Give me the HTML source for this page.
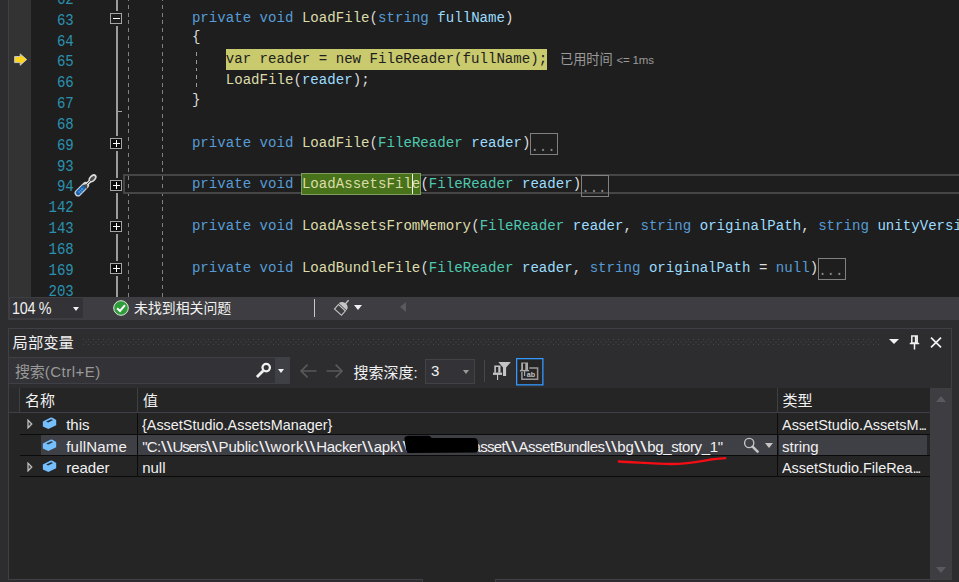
<!DOCTYPE html>
<html lang="zh-CN">
<head>
<meta charset="utf-8">
<title>局部变量</title>
<style>
html,body{margin:0;padding:0;}
body{width:959px;height:582px;overflow:hidden;background:#2d2d30;position:relative;
  font-family:"Liberation Sans","Noto Sans CJK SC",sans-serif;color:#f1f1f1;}
div,span,i{box-sizing:border-box;}
#editor{position:absolute;left:0;top:0;width:959px;height:297px;background:#1e1e1e;overflow:hidden;}
#edge{position:absolute;left:0;top:0;width:8px;height:297px;background:#2d2d30;}
#margin{position:absolute;left:8px;top:0;width:23px;height:297px;background:#333333;border-left:1px solid #3f3f46;}
.ln{position:absolute;left:31px;width:43.4px;height:20.83px;line-height:20.83px;text-align:right;color:#2b91af;
  font-family:"Liberation Mono",monospace;font-size:14.103px;white-space:pre;}
.cl{position:absolute;height:20.83px;line-height:20.83px;white-space:pre;
  font-family:"Liberation Mono",monospace;font-size:14.103px;color:#dcdcdc;}
.sy{display:inline-block;transform:scaleY(1.10);transform-origin:0 78%;position:relative;top:0.5px;}
.sn{display:inline-block;transform:scaleY(1.17);transform-origin:0 78%;position:relative;top:3.5px;left:-0.6px;}
.k{color:#569cd6;} .m{color:#dcdcaa;} .t{color:#4ec9b0;} .v{color:#9cdcfe;} .p{color:#dcdcdc;}
.hlt{color:#1e1e1e;}
.sy.br{top:-1px;}
.curstmt{position:absolute;height:21px;background:#c9c96d;}
.selword{position:absolute;height:22px;background:#48731a;border:1px solid #7f9c63;}
.caret{position:absolute;width:1px;height:20px;background:#f4f4f4;}
.ell{position:absolute;width:28px;height:22px;border:1px solid #808080;color:#8a8a8a;
  font-family:"Liberation Mono",monospace;font-size:14.103px;line-height:21px;white-space:pre;padding-left:0.6px;}
.ell span{display:inline-block;position:relative;top:2.5px;left:-1px;}
#curline{position:absolute;left:123px;top:173.5px;width:840px;height:20.5px;border:2px solid #464646;}
.guide{position:absolute;top:-2.99px;width:1.3px;height:300px;
  background:repeating-linear-gradient(to bottom,#828282 0,#828282 4px,transparent 4px,transparent 7.79px);}
#g3{position:absolute;left:195.7px;top:51.54px;width:1.3px;height:35.5px;
  background:repeating-linear-gradient(to bottom,#9a9a9a 0,#9a9a9a 3.9px,transparent 3.9px,transparent 7.79px);}
#outline{position:absolute;left:116.2px;top:0;width:1.7px;height:297px;background:#9c9c9c;}
.fold{position:absolute;left:110.2px;width:12px;height:11px;border:1px solid #a5a5a5;background:#0c0c0c;}
.fold.mn{background:#1e1e1e;}
.fgap{position:absolute;left:115px;width:4px;height:15px;background:#1e1e1e;}
.fold .fh{position:absolute;left:2px;top:4px;width:7px;height:1px;background:#fff;}
.fold .fv{position:absolute;left:5px;top:1px;width:1px;height:7px;background:#fff;}
.tick{position:absolute;left:117px;width:5px;height:1px;background:#a5a5a5;}
#elapsed{position:absolute;left:560px;top:50.8px;height:18px;line-height:18px;font-size:13.2px;color:#9a9a9a;white-space:pre;}
#elapsed b{font-weight:normal;font-size:11.5px;letter-spacing:-0.15px;}

#strip{position:absolute;left:8px;top:297px;width:951px;height:23px;background:#3e3e42;}
#zoom{position:absolute;left:2px;top:1px;width:73px;height:20px;background:#333337;}
#zoom span{position:absolute;left:2.4px;top:0.8px;line-height:20.4px;font-size:15.7px;letter-spacing:-0.3px;color:#f1f1f1;white-space:pre;transform:scaleX(0.915);transform-origin:0 0;}
.tri{position:absolute;width:0;height:0;border-left:3.5px solid transparent;border-right:3.5px solid transparent;border-top:4px solid #f1f1f1;}
#okc{position:absolute;left:105px;top:2.5px;width:16px;height:16px;}
#noissue{position:absolute;left:126px;top:0;height:23px;line-height:22.5px;font-size:13.9px;color:#f1f1f1;white-space:pre;}
#vsep{position:absolute;left:306px;top:2px;width:1px;height:18px;background:#c8c8c8;}
#brush{position:absolute;left:318px;top:0px;width:26px;height:24px;}
#larr{position:absolute;left:392px;top:5px;width:0;height:0;border-top:5.5px solid transparent;border-bottom:5.5px solid transparent;border-right:6px solid #5a5a5e;}

#panel{position:absolute;left:8px;top:328px;width:944px;height:252px;border:1px solid #3f3f46;border-bottom:none;background:#2d2d30;}
#ptitle{position:absolute;left:3.6px;top:2.7px;height:22px;line-height:22px;font-size:15.3px;color:#f1f1f1;white-space:pre;}
#grip{position:absolute;left:74px;top:10px;width:797px;height:6px;
  background-image:radial-gradient(circle at 0.5px 0.5px,#47474b 0.55px,transparent 0.85px),radial-gradient(circle at 0.5px 0.5px,#47474b 0.55px,transparent 0.85px);
  background-size:5px 5px,5px 5px;background-position:0 0,2.5px 2.5px;}
#search{position:absolute;left:0;top:28px;width:281px;height:27px;background:#333337;border:1px solid #3f3f46;border-left:none;}
#search .ph{position:absolute;left:6px;top:0.8px;line-height:26px;font-size:15px;color:#999999;white-space:pre;letter-spacing:-0.15px;}
#search .dd{position:absolute;left:266px;top:0;width:15px;height:25px;background:#3f3f46;}
#tbl{position:absolute;left:0;top:59px;width:921px;height:191px;background:#252526;}
#hdr{position:absolute;left:0;top:0;width:921px;height:25px;background:#252526;border-bottom:1px solid #3f3f46;}
#hdr .ind{position:absolute;left:0;top:0;width:11px;height:24px;background:#2a2a2c;border-right:1px solid #3f3f46;}
.hc{position:absolute;top:0.8px;height:24px;line-height:24px;font-size:15px;color:#f1f1f1;white-space:pre;}
.hsep{position:absolute;top:0;width:1px;height:24px;background:#3f3f46;}
.row{position:absolute;left:11px;width:910px;height:21px;border-bottom:1px solid #0b0b0b;}
.cell{position:absolute;top:1.7px;height:20px;line-height:20px;font-size:15px;color:#f1f1f1;white-space:pre;transform-origin:0 0;}
.dots{letter-spacing:-1.8px;}
.bsw{display:inline-block;vertical-align:top;height:20px;}
.bs{display:inline-block;transform-origin:0 50%;position:relative;left:0.3px;}
.csep{position:absolute;top:25px;width:1px;height:64px;background:#0b0b0b;}
.selbg{position:absolute;top:0;height:20px;background:#3f3f46;}
.exp{position:absolute;left:6.8px;top:6.2px;width:7px;height:10px;}
.cube{position:absolute;left:22px;top:4px;width:15px;height:13px;}
#sb{position:absolute;left:921px;top:59px;width:22px;height:191px;background:#3e3e42;}
</style>
</head>
<body>
<div id="editor">
  <div id="edge"></div><div id="margin"></div>
  <div class="guide" style="left:127.7px"></div>
  <div class="guide" style="left:161.9px"></div>
  <div id="g3"></div>
  <div id="outline"></div>
  <div id="curline"></div>
<div class="ln" style="top:-13.50px"><span class="sn">62</span></div>
<div class="ln" style="top:7.33px"><span class="sn">63</span></div>
<div class="fgap" style="top:10.93px"></div>
<div class="fold mn" style="top:12.93px"><i class="fh"></i></div>
<div class="cl" style="left:191.90px;top:7.33px"><span class="sy k">private void </span></div>
<div class="cl" style="left:301.92px;top:7.33px"><span class="sy m">LoadFile</span></div>
<div class="cl" style="left:369.62px;top:7.33px"><span class="sy p">(</span></div>
<div class="cl" style="left:378.09px;top:7.33px"><span class="sy k">string </span></div>
<div class="cl" style="left:437.33px;top:7.33px"><span class="sy v">fullName</span></div>
<div class="cl" style="left:505.03px;top:7.33px"><span class="sy p">)</span></div>
<div class="ln" style="top:28.16px"><span class="sn">64</span></div>
<div class="cl" style="left:191.90px;top:28.16px"><span class="sy p br">{</span></div>
<div class="ln" style="top:48.99px"><span class="sn">65</span></div>
<div class="curstmt" style="left:226px;top:49px;width:321px"></div>
<div class="cl" style="left:225.75px;top:48.99px"><span class="sy hlt">var reader = new FileReader(fullName);</span></div>
<div class="ln" style="top:69.82px"><span class="sn">66</span></div>
<div class="cl" style="left:225.75px;top:69.82px"><span class="sy m">LoadFile</span></div>
<div class="cl" style="left:293.46px;top:69.82px"><span class="sy p">(</span></div>
<div class="cl" style="left:301.92px;top:69.82px"><span class="sy v">reader</span></div>
<div class="cl" style="left:352.70px;top:69.82px"><span class="sy p">);</span></div>
<div class="ln" style="top:90.65px"><span class="sn">67</span></div>
<div class="tick" style="top:110.68px"></div>
<div class="cl" style="left:191.90px;top:90.65px"><span class="sy p br">}</span></div>
<div class="ln" style="top:111.48px"><span class="sn">68</span></div>
<div class="ln" style="top:132.31px"><span class="sn">69</span></div>
<div class="fgap" style="top:135.91px"></div>
<div class="fold" style="top:137.91px"><i class="fh"></i><i class="fv"></i></div>
<div class="cl" style="left:191.90px;top:132.31px"><span class="sy k">private void </span></div>
<div class="cl" style="left:301.92px;top:132.31px"><span class="sy m">LoadFile</span></div>
<div class="cl" style="left:369.62px;top:132.31px"><span class="sy p">(</span></div>
<div class="cl" style="left:378.09px;top:132.31px"><span class="sy t">FileReader </span></div>
<div class="cl" style="left:471.18px;top:132.31px"><span class="sy v">reader</span></div>
<div class="cl" style="left:521.96px;top:132.31px"><span class="sy p">)</span></div>
<div class="ell" style="left:529.82px;top:133.01px"><span>...</span></div>
<div class="ln" style="top:153.14px"><span class="sn">93</span></div>
<div class="ln" style="top:173.97px"><span class="sn">94</span></div>
<div class="fgap" style="top:177.57px"></div>
<div class="fold" style="top:179.57px"><i class="fh"></i><i class="fv"></i></div>
<div class="cl" style="left:191.90px;top:173.97px"><span class="sy k">private void </span></div>
<div class="selword" style="left:301.32px;top:172.97px;width:119.48px"></div>
<div class="cl" style="left:301.92px;top:173.97px"><span class="sy m">LoadAssetsFile</span></div>
<div class="caret" style="left:411.94px;top:174.27px"></div>
<div class="cl" style="left:420.40px;top:173.97px"><span class="sy p">(</span></div>
<div class="cl" style="left:428.86px;top:173.97px"><span class="sy t">FileReader </span></div>
<div class="cl" style="left:521.96px;top:173.97px"><span class="sy v">reader</span></div>
<div class="cl" style="left:572.74px;top:173.97px"><span class="sy p">)</span></div>
<div class="ell" style="left:580.60px;top:174.67px"><span>...</span></div>
<div class="ln" style="top:194.80px"><span class="sn">142</span></div>
<div class="ln" style="top:215.63px"><span class="sn">143</span></div>
<div class="fgap" style="top:219.23px"></div>
<div class="fold" style="top:221.23px"><i class="fh"></i><i class="fv"></i></div>
<div class="cl" style="left:191.90px;top:215.63px"><span class="sy k">private void </span></div>
<div class="cl" style="left:301.92px;top:215.63px"><span class="sy m">LoadAssetsFromMemory</span></div>
<div class="cl" style="left:471.18px;top:215.63px"><span class="sy p">(</span></div>
<div class="cl" style="left:479.64px;top:215.63px"><span class="sy t">FileReader </span></div>
<div class="cl" style="left:572.74px;top:215.63px"><span class="sy v">reader</span></div>
<div class="cl" style="left:623.51px;top:215.63px"><span class="sy p">, </span></div>
<div class="cl" style="left:640.44px;top:215.63px"><span class="sy k">string </span></div>
<div class="cl" style="left:699.68px;top:215.63px"><span class="sy v">originalPath</span></div>
<div class="cl" style="left:801.24px;top:215.63px"><span class="sy p">, </span></div>
<div class="cl" style="left:818.16px;top:215.63px"><span class="sy k">string </span></div>
<div class="cl" style="left:877.40px;top:215.63px"><span class="sy v">unityVersion</span></div>
<div class="cl" style="left:978.96px;top:215.63px"><span class="sy p">, </span></div>
<div class="ln" style="top:236.46px"><span class="sn">168</span></div>
<div class="ln" style="top:257.29px"><span class="sn">169</span></div>
<div class="fgap" style="top:260.89px"></div>
<div class="fold" style="top:262.89px"><i class="fh"></i><i class="fv"></i></div>
<div class="cl" style="left:191.90px;top:257.29px"><span class="sy k">private void </span></div>
<div class="cl" style="left:301.92px;top:257.29px"><span class="sy m">LoadBundleFile</span></div>
<div class="cl" style="left:420.40px;top:257.29px"><span class="sy p">(</span></div>
<div class="cl" style="left:428.86px;top:257.29px"><span class="sy t">FileReader </span></div>
<div class="cl" style="left:521.96px;top:257.29px"><span class="sy v">reader</span></div>
<div class="cl" style="left:572.74px;top:257.29px"><span class="sy p">, </span></div>
<div class="cl" style="left:589.66px;top:257.29px"><span class="sy k">string </span></div>
<div class="cl" style="left:648.90px;top:257.29px"><span class="sy v">originalPath </span></div>
<div class="cl" style="left:758.92px;top:257.29px"><span class="sy p">= </span></div>
<div class="cl" style="left:775.85px;top:257.29px"><span class="sy k">null</span></div>
<div class="cl" style="left:809.70px;top:257.29px"><span class="sy p">)</span></div>
<div class="ell" style="left:817.56px;top:257.99px"><span>...</span></div>
<div class="ln" style="top:278.12px"><span class="sn">203</span></div>
  <div id="elapsed">已用时间 <b>&lt;= 1ms</b></div>
  <!-- current statement arrow -->
  <svg style="position:absolute;left:8px;top:48px" width="28" height="24" viewBox="0 0 28 24">
    <path d="M6.6 8.5 H12.2 V5.9 L18.7 11.5 L12.2 17.3 V14.6 H6.6 Z" fill="#ffd61e" stroke="#c9c9cf" stroke-width="0.9" stroke-linejoin="miter"/>
  </svg>
  <!-- quick action screwdriver -->
  <svg style="position:absolute;left:70px;top:170px" width="32" height="30" viewBox="0 0 32 30">
    <path d="M8 23 L15.6 15.4" stroke="#d9d9d9" stroke-width="6.8" stroke-linecap="round" fill="none"/>
    <path d="M15 16 L21.4 9.8" stroke="#d9d9d9" stroke-width="3.2" stroke-linecap="round" fill="none"/>
    <ellipse cx="22.6" cy="8.2" rx="4.7" ry="3.2" transform="rotate(-47 22.6 8.2)" fill="#d9d9d9"/>
    <ellipse cx="22.4" cy="8.5" rx="3.1" ry="1.6" transform="rotate(-47 22.4 8.5)" fill="#4a4a4a"/>
    <path d="M8.2 22.8 L13.6 17.4" stroke="#1662ae" stroke-width="4.8" stroke-linecap="round" fill="none"/>
    <path d="M12.6 15.2 L17 19 L17.4 15 L15.6 14.2 Z" fill="#4a4a4a"/>
    <path d="M15.6 15.4 L20.6 10.4" stroke="#4a4a4a" stroke-width="1" fill="none"/>
    <path d="M9.4 19.2 l3.6 3.6 M11 17.8 l3.4 3.4 M8 20.8 l3.4 3.4" stroke="#7fb0e0" stroke-width="0.5"/>
    <path d="M8.6 22.6 l4.6 -4.6 M10.2 24 l4.6 -4.6" stroke="#7fb0e0" stroke-width="0.5"/>
  </svg>
</div>

<div id="strip">
  <div id="zoom"><span>104 %</span><i class="tri" style="left:63.2px;top:9px"></i></div>
  <svg id="okc" viewBox="0 0 16 16"><circle cx="8" cy="8" r="7.3" fill="#2f9b3a" stroke="#dfe8df" stroke-width="1"/><path d="M4.1 8.3 L7 11 L12 5.2" fill="none" stroke="#fff" stroke-width="2"/></svg>
  <div id="noissue">未找到相关问题</div>
  <div id="vsep"></div>
  <svg id="brush" viewBox="0 0 26 24">
    <g transform="translate(14.4,12.4) rotate(42)" fill="none" stroke="#c6c6c6">
      <path d="M0 -7.4 V-12.2" stroke-width="1.4"/>
      <path d="M-5.2 -3.5 A5.2 4.6 0 0 1 5.2 -3.5 Z" fill="#c6c6c6" stroke="none"/>
      <path d="M-4.7 -2.3 H4.7 V3.6 H-4.7 Z" stroke-width="1.1"/>
    </g>
  </svg>
  <i class="tri" style="left:345.8px;top:7.6px;border-left-width:4.8px;border-right-width:4.8px;border-top-width:5.2px"></i>
  <i id="larr"></i>
</div>

<div id="panel">
  <div id="ptitle">局部变量</div>
  <div id="grip"></div>
  <!-- title buttons -->
  <i class="tri" style="left:880px;top:9.8px;border-left-width:5px;border-right-width:5px;border-top-width:5.2px"></i>
  <svg style="position:absolute;left:900px;top:5.7px" width="11" height="15" viewBox="0 0 11 15">
    <path d="M2.8 1 H8.2 V8 H2.8 Z M6.6 1 V8 M0.8 8.6 H10.2 M5.5 8.6 V14.4" fill="none" stroke="#f1f1f1" stroke-width="1.5"/>
  </svg>
  <svg style="position:absolute;left:921px;top:7.7px" width="12" height="11" viewBox="0 0 12 11">
    <path d="M1 0.6 L11 10.4 M11 0.6 L1 10.4" stroke="#f1f1f1" stroke-width="1.7" fill="none"/>
  </svg>

  <div id="search">
    <span class="ph">搜索<span style="letter-spacing:0.5px">(Ctrl+E)</span></span>
    <div class="dd"></div>
    <svg style="position:absolute;left:246px;top:3.6px" width="17" height="17" viewBox="0 0 17 17">
      <circle cx="11.2" cy="5.6" r="3.7" fill="none" stroke="#f1f1f1" stroke-width="2.3"/>
      <path d="M8.2 8.8 L1.9 14.9" stroke="#f1f1f1" stroke-width="2.8" stroke-linecap="butt"/>
    </svg>
    <i class="tri" style="left:269.2px;top:10.8px;border-left-width:3.8px;border-right-width:3.8px;border-top-width:4px"></i>
  </div>
  <!-- nav arrows -->
  <svg style="position:absolute;left:290px;top:33.8px" width="54" height="16" viewBox="0 0 54 16">
    <path d="M17.6 8 H2.6 M8.6 1.6 L2.2 8 L8.6 14.4" fill="none" stroke="#58585a" stroke-width="1.7"/>
    <path d="M27.6 8 H42.6 M36.6 1.6 L43 8 L36.6 14.4" fill="none" stroke="#58585a" stroke-width="1.7"/>
  </svg>
  <div style="position:absolute;left:344.5px;top:30px;line-height:27px;font-size:15px;color:#f1f1f1;white-space:pre;">搜索深度:</div>
  <div style="position:absolute;left:416px;top:30px;width:50px;height:25px;background:#333337;border:1px solid #434346;">
    <span style="position:absolute;left:5px;top:0;line-height:22px;font-size:15px;color:#f1f1f1;">3</span>
    <i class="tri" style="left:36.5px;top:9.6px;border-top-color:#999999;border-left-width:3.6px;border-right-width:3.6px;border-top-width:4px"></i>
  </div>
  <div style="position:absolute;left:475px;top:31px;width:1px;height:22px;background:#46464a;"></div>
  <!-- filter pin icons -->
  <svg style="position:absolute;left:479px;top:25px" width="60" height="36" viewBox="0 0 60 36">
    <g fill="#c4c4c4" stroke="none">
      <path d="M6.3 11.6 H12.5 V18.8 H6.3 Z M7.9 13 V18.8 H10.3 V13 Z" fill-rule="evenodd"/>
      <rect x="5" y="18.6" width="9.1" height="2.3"/>
      <rect x="9" y="20.8" width="1.1" height="5.2"/>
      <path d="M10.3 8.1 H22.8 L18.1 13.6 V21.9 H15 V13.6 Z"/>
    </g>
    <rect x="28.65" y="4.65" width="26.2" height="26.2" fill="#262424" stroke="#3399ff" stroke-width="1.3"/>
    <g fill="#a9a9a9" stroke="none">
      <path d="M33.2 8.4 H40 V16.3 H33.2 Z M35 9.6 V16.3 H37.3 V9.6 Z" fill-rule="evenodd"/>
      <rect x="31.9" y="15.9" width="9.2" height="1.5"/>
      <rect x="36" y="17.2" width="1.2" height="4.8"/>
    </g>
    <path d="M41.3 14.1 H49.6 V25.2 H33.9 V18.1" fill="none" stroke="#9a9a9a" stroke-width="1.5"/>
    <text x="38.7" y="22.9" font-family="Liberation Sans, sans-serif" font-size="7.6" font-weight="bold" fill="#c2c2c2" textLength="8.4" lengthAdjust="spacingAndGlyphs">ab</text>
  </svg>

  <div id="tbl">
    <div id="hdr">
      <div class="ind"></div>
      <div class="hc" style="left:16px">名称</div>
      <div class="hsep" style="left:128px"></div>
      <div class="hc" style="left:134px">值</div>
      <div class="hsep" style="left:768px"></div>
      <div class="hc" style="left:773.5px">类型</div>
    </div>
    <div class="csep" style="left:128px"></div>
    <div class="csep" style="left:768px"></div>

    <div class="row" style="top:25px;height:22px">
      <svg class="exp" viewBox="0 0 7 10"><path d="M1 1.1 L4.8 5 L1 8.9 Z" fill="#3a3a3c" stroke="#bdbdbd" stroke-width="1.3" stroke-linejoin="miter"/></svg>
      <svg class="cube" viewBox="22 4 15 13"><path d="M22.86 8.6 L30.8 4.6 L32.5 4.8 L36.2 6.9 V12.35 L28.3 16.1 L22.86 13.4 Z" fill="#75bfff"/><path d="M26.2 8.4 L31.2 6.3 L33.1 7.1 L28.1 9.4 Z" fill="#1f2a35"/></svg>
      <div class="cell" id="c_this" style="left:46.2px">this</div>
      <div class="cell" id="c_v1" style="left:122.2px;transform:scaleX(0.9594)">{AssetStudio.AssetsManager}</div>
      <div class="cell" id="c_t1" style="left:762px;transform:scaleX(0.9635)">AssetStudio.AssetsM<span class="dots">...</span></div>
    </div>
    <div class="row" style="top:47px">
      <div class="selbg" style="left:20.8px;width:96.2px"></div>
      <div class="selbg" style="left:118.2px;width:639.3px"></div>
      <div class="selbg" style="left:758.7px;width:148.8px"></div>
      <svg class="cube" viewBox="22 4 15 13"><path d="M22.86 8.6 L30.8 4.6 L32.5 4.8 L36.2 6.9 V12.35 L28.3 16.1 L22.86 13.4 Z" fill="#75bfff"/><path d="M26.2 8.4 L31.2 6.3 L33.1 7.1 L28.1 9.4 Z" fill="#2c3744"/></svg>
      <div class="cell" id="c_full" style="left:46.2px;letter-spacing:0.22px">fullName</div>
      <div class="cell" id="c_v2a" style="left:122.2px"><span style="letter-spacing:-0.709px">"C:</span><span class="bsw" style="width:12.20px"><span class="bs" style="transform:scaleX(1.366)">\\</span></span><span style="letter-spacing:-1.154px">Users</span><span class="bsw" style="width:12.60px"><span class="bs" style="transform:scaleX(1.414)">\\</span></span><span style="letter-spacing:-0.193px">Public</span><span class="bsw" style="width:12.10px"><span class="bs" style="transform:scaleX(1.354)">\\</span></span><span style="letter-spacing:0.482px">work</span><span class="bsw" style="width:12.30px"><span class="bs" style="transform:scaleX(1.378)">\\</span></span><span style="letter-spacing:-0.336px">Hacker</span><span class="bsw" style="width:12.00px"><span class="bs" style="transform:scaleX(1.342)">\\</span></span><span style="letter-spacing:-0.263px">apk</span><span class="bsw" style="width:12.10px"><span class="bs" style="transform:scaleX(1.354)">\\</span></span></div>
      <div class="cell" id="c_v2b" style="left:452.5px"><span style="letter-spacing:-0.672px">asset</span><span class="bsw" style="width:13.50px"><span class="bs" style="transform:scaleX(1.522)">\\</span></span><span style="letter-spacing:-0.470px">AssetBundles</span><span class="bsw" style="width:12.70px"><span class="bs" style="transform:scaleX(1.426)">\\</span></span><span style="letter-spacing:-0.044px">bg</span><span class="bsw" style="width:13.40px"><span class="bs" style="transform:scaleX(1.510)">\\</span></span><span style="letter-spacing:-0.386px">bg_story_1"</span></div>
      <!-- redaction blob -->
      <svg style="position:absolute;left:380px;top:0" width="80" height="20" viewBox="0 0 80 20">
        <path d="M4.4 3.4 Q4.8 1 9 0.8 L28.6 0.8 Q31 1 31.6 3 L74 3 Q77.4 3.2 77.8 6 L78.3 13 Q78.5 17.2 76 17.6 L9 18.1 Q6.4 18 6.2 15.5 L5 8 Z" fill="#000"/>
      </svg>
      <svg style="position:absolute;left:723px;top:1.6px" width="17" height="17" viewBox="0 0 17 17">
        <circle cx="6.2" cy="6" r="4.6" fill="none" stroke="#c4c4c4" stroke-width="1.4"/>
        <path d="M9.6 9.6 L14.6 14.6" stroke="#c4c4c4" stroke-width="2.6" stroke-linecap="round"/>
      </svg>
      <i class="tri" style="left:745px;top:8px;border-top-color:#c4c4c4;border-left-width:4.6px;border-right-width:4.6px;border-top-width:5px"></i>
      <div class="cell" id="c_t2" style="left:762px">string</div>
    </div>
    <div class="row" style="top:68px">
      <svg class="exp" viewBox="0 0 7 10"><path d="M1 1.1 L4.8 5 L1 8.9 Z" fill="#3a3a3c" stroke="#bdbdbd" stroke-width="1.3" stroke-linejoin="miter"/></svg>
      <svg class="cube" viewBox="22 4 15 13"><path d="M22.86 8.6 L30.8 4.6 L32.5 4.8 L36.2 6.9 V12.35 L28.3 16.1 L22.86 13.4 Z" fill="#75bfff"/><path d="M26.2 8.4 L31.2 6.3 L33.1 7.1 L28.1 9.4 Z" fill="#1f2a35"/></svg>
      <div class="cell" id="c_reader" style="left:46.2px">reader</div>
      <div class="cell" id="c_v3" style="left:122.2px">null</div>
      <div class="cell" id="c_t3" style="left:762px;transform:scaleX(0.961)">AssetStudio.FileRea<span class="dots">...</span></div>
    </div>
    <!-- hand-drawn red underline -->
    <svg style="position:absolute;left:600px;top:64px" width="130" height="14" viewBox="0 0 130 14">
      <path d="M9.8 9.5 C25 10 45 11.9 62.3 12 C78 12 92 9.2 101.7 7.5 C107 6.8 112 6.6 116.2 6.1" fill="none" stroke="#f40d14" stroke-width="2.3" stroke-linecap="round"/>
    </svg>
  </div>
  <div id="sb">
    <i style="position:absolute;left:5.5px;top:8px;width:0;height:0;border-left:5.5px solid transparent;border-right:5.5px solid transparent;border-bottom:6px solid #5a5a5e;"></i>
    <i style="position:absolute;left:5.5px;top:178.5px;width:0;height:0;border-left:5.5px solid transparent;border-right:5.5px solid transparent;border-top:6px solid #5a5a5e;"></i>
  </div>
</div>
<!-- bottom border of panel with tab gap -->
<div style="position:absolute;left:8px;top:579px;width:415px;height:1px;background:#3f3f46;"></div>
<div style="position:absolute;left:422px;top:579px;width:1px;height:3px;background:#3f3f46;"></div>
<div style="position:absolute;left:423px;top:579px;width:72px;height:3px;background:#252526;"></div>
<div style="position:absolute;left:495px;top:579px;width:1px;height:3px;background:#3f3f46;"></div>
<div style="position:absolute;left:495px;top:579px;width:457px;height:1px;background:#3f3f46;"></div>
</body>
</html>
